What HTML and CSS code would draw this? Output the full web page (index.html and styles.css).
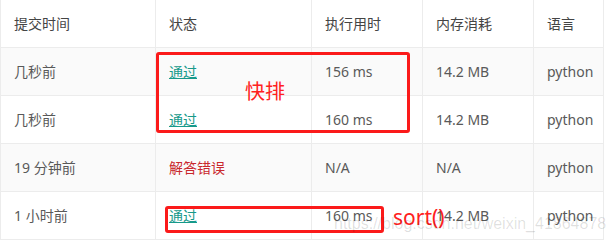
FILE: index.html
```html
<!DOCTYPE html>
<html lang="zh">
<head>
<meta charset="utf-8">
<link rel="stylesheet" href="styles.css">
</head>
<body>
<div class="page">
  <div class="table">
    <div class="row head">
      <div class="cell">提交时间</div>
      <div class="cell">状态</div>
      <div class="cell">执行用时</div>
      <div class="cell">内存消耗</div>
      <div class="cell">语言</div>
    </div>
    <div class="row alt">
      <div class="cell">几秒前</div>
      <div class="cell"><span class="ok">通过</span></div>
      <div class="cell">156 ms</div>
      <div class="cell">14.2 MB</div>
      <div class="cell">python</div>
    </div>
    <div class="row">
      <div class="cell">几秒前</div>
      <div class="cell"><span class="ok">通过</span></div>
      <div class="cell">160 ms</div>
      <div class="cell">14.2 MB</div>
      <div class="cell">python</div>
    </div>
    <div class="row alt">
      <div class="cell">19 分钟前</div>
      <div class="cell"><span class="err">解答错误</span></div>
      <div class="cell">N/A</div>
      <div class="cell">N/A</div>
      <div class="cell">python</div>
    </div>
    <div class="row">
      <div class="cell">1 小时前</div>
      <div class="cell"><span class="ok">通过</span></div>
      <div class="cell">160 ms</div>
      <div class="cell">14.2 MB</div>
      <div class="cell">python</div>
    </div>
  </div>
  <div class="mark box1"></div>
  <div class="mark box2"></div>
  <div class="note note1">快排</div>
  <div class="note note2">sort()</div>
  <div class="watermark">https://blog.csdn.net/weixin_41864878</div>
</div>
</body>
</html>
```
FILE: styles.css
```css
html, body {
  margin: 0;
  padding: 0;
  background: #fff;
}
.page {
  position: relative;
  width: 615px;
  height: 243px;
  overflow: hidden;
  font-family: "Noto Sans", "Noto Sans CJK SC", sans-serif;
  font-size: 14px;
  color: #595959;
}
.table {
  width: 603px;
  border-left: 1px solid #ececec;
}
.row {
  display: grid;
  grid-template-columns: 155px 156px 111px 111px 70px;
  height: 48px;
  box-sizing: border-box;
  border-bottom: 1px solid #ececec;
  background: #fff;
}
.row.alt {
  background: #fafafa;
}
.row.head {
  color: #444;
}
.cell {
  display: flex;
  align-items: center;
  padding-left: 13px;
  border-right: 1px solid #ececec;
  box-sizing: border-box;
  white-space: nowrap;
  padding-bottom: 1px;
}
.ok {
  color: #16998a;
  text-decoration: underline;
  text-underline-offset: 1px;
}
.err {
  color: #c9282d;
}
.mark {
  position: absolute;
  border: 3px solid #fb1a1a;
  border-radius: 3px;
  box-sizing: border-box;
}
.box1 {
  left: 156px;
  top: 52px;
  width: 254px;
  height: 81px;
}
.box2 {
  left: 165px;
  top: 206px;
  width: 219px;
  height: 27px;
}
.note {
  position: absolute;
  color: #ff2020;
  font-family: "Noto Sans", "Noto Sans CJK SC", sans-serif;
  font-size: 20px;
  line-height: 24px;
}
.note1 {
  left: 245px;
  top: 80px;
}
.note2 {
  left: 393px;
  top: 205px;
  font-size: 21px;
}
.watermark {
  position: absolute;
  left: 334px;
  top: 216px;
  font-family: "Liberation Sans", sans-serif;
  font-size: 16px;
  line-height: 16px;
  color: rgba(0, 0, 0, 0.13);
  white-space: nowrap;
}
```
